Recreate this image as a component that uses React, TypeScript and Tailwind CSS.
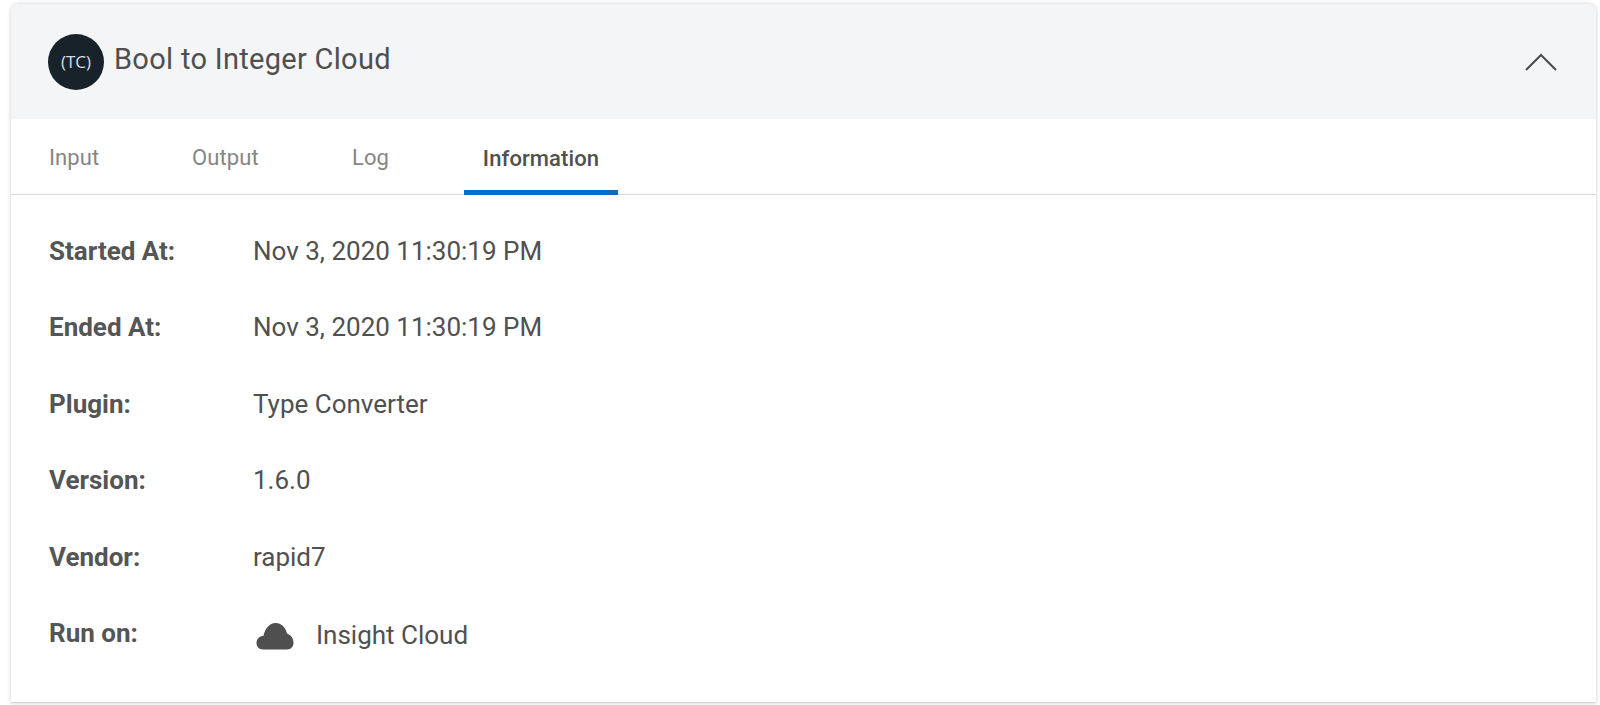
const rows = [
  { label: "Started At:", value: "Nov 3, 2020 11:30:19 PM" },
  { label: "Ended At:", value: "Nov 3, 2020 11:30:19 PM" },
  { label: "Plugin:", value: "Type Converter" },
  { label: "Version:", value: "1.6.0" },
  { label: "Vendor:", value: "rapid7" },
];

const tabs = ["Input", "Output", "Log"];

function CloudIcon() {
  return (
    <svg className="w-[38px] h-[28px] ml-[3px] text-[#4f4f4f]" viewBox="0 0 38 28" fill="currentColor">
      <path d="M7 27.5C3 27.5 0.5 24.6 0.5 21C0.5 17 3.5 14 7.5 13.8C9 6.5 13.5 1 19.5 1C25.5 1 29.5 5.5 31 11.5C35 13 37.5 16.5 37.5 20.8C37.5 24.8 34.8 27.5 31 27.5Z" />
    </svg>
  );
}

export default function App() {
  return (
    <div className="h-[705px] overflow-hidden bg-white pt-1 pl-[11px] pr-1 font-['Roboto',sans-serif]">
      <div className="h-[699px] rounded-t-lg bg-white border-b border-[#d5dade] shadow-[0_0_4px_rgba(0,0,0,0.2)]">
        <div className="flex items-center justify-between h-[115px] pl-[37px] pr-[39px] rounded-t-lg bg-[#f4f5f7]">
          <div className="flex items-center gap-[10px]">
            <div className="flex items-center justify-center w-14 h-14 rounded-full bg-[#18222b] text-[#d8dde0] text-[17px] font-['Open_Sans',sans-serif]">
              (TC)
            </div>
            <span className="mb-1 text-[29px] text-[#4f4f4f] tracking-[0.3px]">Bool to Integer Cloud</span>
          </div>
          <svg className="w-8 h-[18px] text-[#4a4a4a]" viewBox="0 0 32 18" fill="none" stroke="currentColor" strokeWidth={2}>
            <path d="M1 17L16 2L31 17" />
          </svg>
        </div>

        <div className="flex h-[76px] pl-5 border-b border-[#d5dade]">
          {tabs.map((t, i) => (
            <div
              key={t}
              className={`flex items-center px-[18px] pt-[2px] text-[22px] tracking-[0.1px] text-[#858585] ${i === 0 ? "w-[143px]" : i === 1 ? "w-[160px]" : "w-[130px]"}`}
            >
              {t}
            </div>
          ))}
          <div className="flex items-center justify-center w-[154px] h-[76px] border-b-[5px] border-[#0a6cc9] pt-[7px] text-[22px] font-medium tracking-[0.1px] text-[#505050]">
            Information
          </div>
        </div>

        <div className="pl-[38px] pt-[18px] text-[26px] text-[#505050]">
          {rows.map((r) => (
            <div key={r.label} className="flex items-center h-[76.5px]">
              <span className="w-[204px] font-bold text-[#555555]">{r.label}</span>
              <span>{r.value}</span>
            </div>
          ))}
          <div className="flex items-center h-[76px] mt-[2px]">
            <span className="w-[204px] mb-1 font-bold text-[#555555]">Run on:</span>
            <CloudIcon />
            <span className="ml-[22px]">Insight Cloud</span>
          </div>
        </div>
      </div>
    </div>
  );
}
